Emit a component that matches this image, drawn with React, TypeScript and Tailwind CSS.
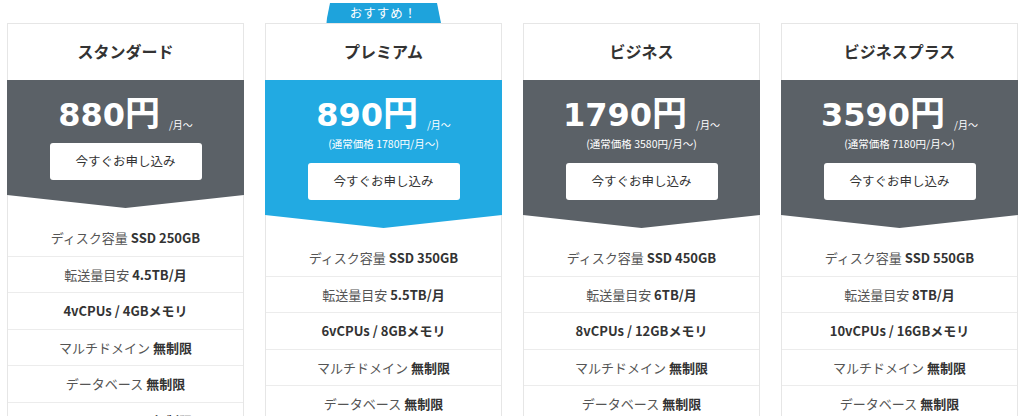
import React from "react";

interface Plan {
  name: string;
  price: string;
  regular?: string;
  disk: string;
  transfer: string;
  cpu: string;
  featured?: boolean;
}

const plans: Plan[] = [
  { name: "スタンダード", price: "880", disk: "SSD 250GB", transfer: "4.5TB/月", cpu: "4vCPUs / 4GBメモリ" },
  { name: "プレミアム", price: "890", regular: "1780", disk: "SSD 350GB", transfer: "5.5TB/月", cpu: "6vCPUs / 8GBメモリ", featured: true },
  { name: "ビジネス", price: "1790", regular: "3580", disk: "SSD 450GB", transfer: "6TB/月", cpu: "8vCPUs / 12GBメモリ" },
  { name: "ビジネスプラス", price: "3590", regular: "7180", disk: "SSD 550GB", transfer: "8TB/月", cpu: "10vCPUs / 16GBメモリ" },
];

const jp = "font-['Noto_Sans_CJK_JP',sans-serif]";

function Row({ children }: { children: React.ReactNode }) {
  return (
    <div className="h-[36.5px] flex items-center justify-center border-b border-[#ececec] text-[13px] text-[#555]">
      {children}
    </div>
  );
}

function PlanCard({ plan }: { plan: Plan }) {
  const band = plan.featured ? "bg-[#22aae2]" : "bg-[#5b6167]";
  return (
    <div className={`relative w-[237px] shrink-0 bg-white border border-[#e6e6e6] ${jp}`}>
      {plan.featured && (
        <div className="absolute -top-[21px] left-1/2 -translate-x-1/2 w-[115px] h-[20px] bg-[#1ea3dc] [clip-path:polygon(4px_0,calc(100%_-_4px)_0,100%_100%,0_100%)] flex items-center justify-center text-white text-[12.5px] tracking-[1px]">
          おすすめ！
        </div>
      )}

      {/* Plan name */}
      <div className="h-[56px] flex items-center justify-center text-[16px] font-bold text-[#333] pb-[2px]">
        {plan.name}
      </div>

      {/* Price band */}
      <div
        className={`-mx-px ${band} pt-[12px] pb-[28px] flex flex-col items-center text-white [clip-path:polygon(0_0,100%_0,100%_calc(100%_-_13px),50%_100%,0_calc(100%_-_13px))]`}
      >
        <div className="h-[42px] flex items-end gap-[9px] pb-[3px]">
          <span className="leading-none">
            <span className="font-['DejaVu_Sans',sans-serif] font-bold text-[32px]">{plan.price}</span>
            <span className="font-bold text-[35px]">円</span>
          </span>
          <span className="text-[10px] leading-none pb-[1px]">/月〜</span>
        </div>
        {plan.regular && (
          <div className="h-[20px] flex items-center text-[10.5px] leading-none">
            (通常価格 {plan.regular}円/月〜)
          </div>
        )}
        <button className="mt-[9px] w-[152px] h-[37px] bg-white rounded-[3px] text-[12.5px] text-[#333]">
          今すぐお申し込み
        </button>
      </div>

      {/* Features */}
      <div className="pt-[12px]">
        <Row>
          ディスク容量&nbsp;<b className="text-[#333]">{plan.disk}</b>
        </Row>
        <Row>
          転送量目安&nbsp;<b className="text-[#333]">{plan.transfer}</b>
        </Row>
        <Row>
          <b className="text-[#333]">{plan.cpu}</b>
        </Row>
        <Row>
          マルチドメイン&nbsp;<b className="text-[#333]">無制限</b>
        </Row>
        <Row>
          データベース&nbsp;<b className="text-[#333]">無制限</b>
        </Row>
        <Row>
          メールアドレス&nbsp;<b className="text-[#333]">無制限</b>
        </Row>
        <Row>
          独自SSL&nbsp;<b className="text-[#333]">無料</b>
        </Row>
      </div>
    </div>
  );
}

export default function App() {
  return (
    <div className="w-[1024px] h-[416px] overflow-hidden bg-white">
      <div className="flex gap-[21px] pl-[7px] pt-[23px]">
        {plans.map((plan) => (
          <PlanCard key={plan.name} plan={plan} />
        ))}
      </div>
    </div>
  );
}
